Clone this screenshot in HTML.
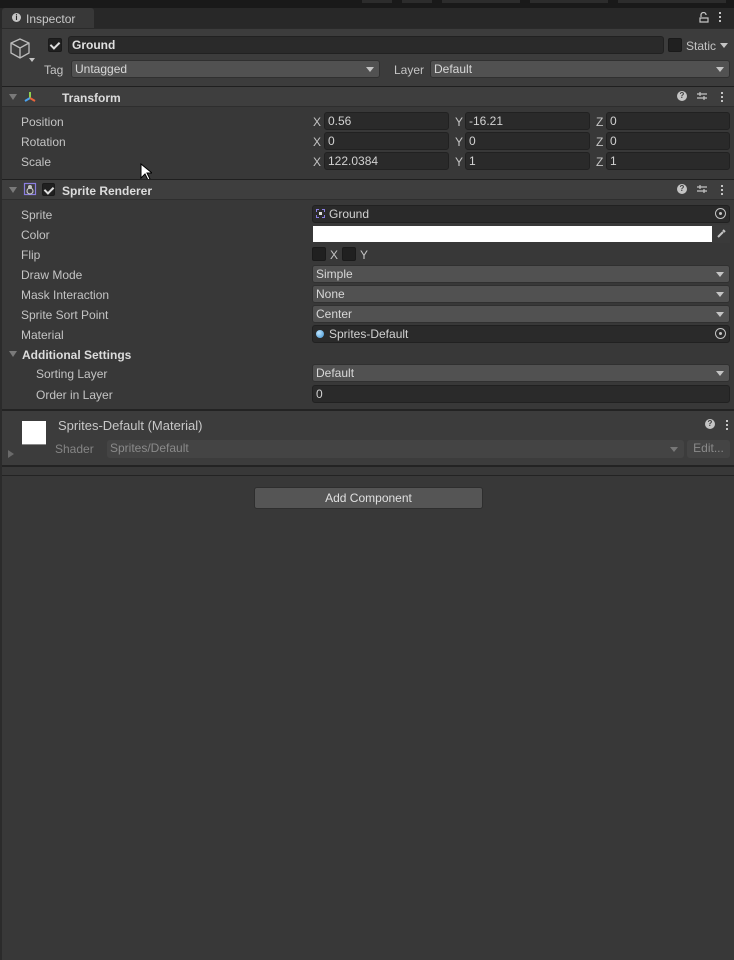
<!DOCTYPE html>
<html><head><style>
*{margin:0;padding:0;box-sizing:border-box}
body{width:734px;height:960px;background:#383838;font-family:"Liberation Sans",sans-serif;font-size:12px;color:#c4c4c4;position:relative;overflow:hidden}
.a{position:absolute}
.lbl{position:absolute;left:21px;line-height:14px;padding-top:1px}
.fld{position:absolute;height:18px;background:#2a2a2a;border:1px solid #212121;border-radius:3px;padding-left:3px;line-height:17px;color:#d2d2d2}
.dd{position:absolute;height:18px;background:#515151;border:1px solid #303030;border-radius:3px;padding-left:3px;line-height:17px;color:#d8d8d8}
.dd:after{content:"";position:absolute;right:5px;top:6px;border-left:4px solid transparent;border-right:4px solid transparent;border-top:5px solid #c4c4c4}
.ax{position:absolute;line-height:14px;padding-top:1px;color:#c4c4c4}
.hdr{position:absolute;left:0;width:734px;height:21px;background:#3e3e3e;border-top:1px solid #1f1f1f;border-bottom:1px solid #2e2e2e}
.tri{position:absolute;border-left:4px solid transparent;border-right:4px solid transparent;border-top:6px solid #7a7a7a}
.cb{position:absolute;width:14px;height:14px;background:#202020;border:1px solid #1a1a1a;border-radius:2px}
.ck:after{content:"";position:absolute;left:3px;top:1px;width:4px;height:7px;border-right:2px solid #ddd;border-bottom:2px solid #ddd;transform:rotate(45deg)}
.sep{position:absolute;left:0;width:734px;height:2px;background:#232323}
.bold{font-weight:bold;color:#dcdcdc}
</style></head><body>
<div class="a" style="left:0;top:0;width:734px;height:8px;background:#191919"></div>
<div class="a" style="left:362px;top:0;width:30px;height:3px;background:#2c2c2c"></div>
<div class="a" style="left:402px;top:0;width:30px;height:3px;background:#2c2c2c"></div>
<div class="a" style="left:442px;top:0;width:78px;height:3px;background:#2c2c2c"></div>
<div class="a" style="left:530px;top:0;width:78px;height:3px;background:#2c2c2c"></div>
<div class="a" style="left:618px;top:0;width:108px;height:3px;background:#2c2c2c"></div>
<div class="a" style="left:0;top:8px;width:734px;height:20px;background:#282828"></div>
<div class="a" style="left:2px;top:8px;width:92px;height:20px;background:#383838;border-radius:3px 3px 0 0"></div>
<div class="a" style="left:12px;top:13px;width:9px;height:9px;border-radius:50%;background:#c4c4c4;color:#282828;font-size:8px;font-weight:bold;text-align:center;line-height:9px">i</div>
<div class="a" style="left:26px;top:12px;font-size:12px;line-height:14px;color:#c8c8c8">Inspector</div>
<svg class="a" style="left:698px;top:12px" width="12" height="12"><path d="M3 5V3a2.5 2.5 0 0 1 5 0M2 6h8v4H2z" fill="none" stroke="#c4c4c4" stroke-width="1.2"/></svg>
<div class="a" style="left:719px;top:12px;width:2px;height:2px;background:#c4c4c4;box-shadow:0 4px #c4c4c4,0 8px #c4c4c4"></div>
<div class="a" style="left:0;top:28px;width:734px;height:1px;background:#2a2a2a"></div>
<div class="a" style="left:0;top:29px;width:734px;height:57px;background:#3c3c3c"></div>
<svg class="a" style="left:9px;top:37px" width="24" height="24"><path d="M11 2l9 4v10l-9 5-9-5V6z M2 6l9 5 9-5 M11 11v10" fill="none" stroke="#bdbdbd" stroke-width="1.3"/></svg>
<div class="a" style="left:29px;top:58px;border-left:3px solid transparent;border-right:3px solid transparent;border-top:4px solid #c4c4c4"></div>
<div class="cb ck" style="left:48px;top:38px"></div>
<div class="fld" style="left:68px;top:36px;width:596px;height:18px;font-weight:bold;color:#e0e0e0">Ground</div>
<div class="cb" style="left:668px;top:38px"></div>
<div class="a" style="left:686px;top:39px;line-height:14px">Static</div>
<div class="a" style="left:720px;top:43px;border-left:4px solid transparent;border-right:4px solid transparent;border-top:5px solid #c4c4c4"></div>
<div class="a" style="left:44px;top:63px;line-height:14px">Tag</div>
<div class="dd" style="left:71px;top:60px;width:309px">Untagged</div>
<div class="a" style="left:394px;top:63px;line-height:14px">Layer</div>
<div class="dd" style="left:430px;top:60px;width:300px">Default</div>
<div class="hdr" style="top:86px"></div>
<div class="tri" style="left:9px;top:94px"></div>
<svg class="a" style="left:23px;top:90px" width="14" height="14"><path d="M7 2v6" stroke="#8fd14f" stroke-width="2"/><path d="M7 8l-5 3" stroke="#4aa3f0" stroke-width="2"/><path d="M7 8l5 3" stroke="#e8643c" stroke-width="2"/></svg>
<div class="a bold" style="left:62px;top:91px;line-height:14px">Transform</div>
<div class="a" style="left:677px;top:91px;width:10px;height:10px;border-radius:50%;background:#c4c4c4;color:#3e3e3e;font-size:8px;font-weight:bold;text-align:center;line-height:10px">?</div>
<svg class="a" style="left:696px;top:90px" width="12" height="12"><path d="M1 4h10M1 8h10M4 2v4M8 6v4" stroke="#c4c4c4" stroke-width="1.2"/></svg>
<div class="a" style="left:721px;top:92px;width:2px;height:2px;background:#c4c4c4;box-shadow:0 4px #c4c4c4,0 8px #c4c4c4"></div>
<div class="lbl" style="top:114px">Position</div>
<div class="lbl" style="top:134px">Rotation</div>
<div class="lbl" style="top:154px">Scale</div>
<div class="ax" style="left:313px;top:114px">X</div><div class="fld" style="left:324px;top:112px;width:125px">0.56</div>
<div class="ax" style="left:455px;top:114px">Y</div><div class="fld" style="left:465px;top:112px;width:125px">-16.21</div>
<div class="ax" style="left:596px;top:114px">Z</div><div class="fld" style="left:606px;top:112px;width:124px">0</div>
<div class="ax" style="left:313px;top:134px">X</div><div class="fld" style="left:324px;top:132px;width:125px">0</div>
<div class="ax" style="left:455px;top:134px">Y</div><div class="fld" style="left:465px;top:132px;width:125px">0</div>
<div class="ax" style="left:596px;top:134px">Z</div><div class="fld" style="left:606px;top:132px;width:124px">0</div>
<div class="ax" style="left:313px;top:154px">X</div><div class="fld" style="left:324px;top:152px;width:125px">122.0384</div>
<div class="ax" style="left:455px;top:154px">Y</div><div class="fld" style="left:465px;top:152px;width:125px">1</div>
<div class="ax" style="left:596px;top:154px">Z</div><div class="fld" style="left:606px;top:152px;width:124px">1</div>
<svg class="a" style="left:140px;top:163px" width="12" height="18"><path d="M1 1v14l4-4 3 6 2-1-3-6h5z" fill="#fff" stroke="#000" stroke-width="1"/></svg>
<div class="hdr" style="top:179px"></div>
<div class="tri" style="left:9px;top:187px"></div>
<svg class="a" style="left:23px;top:182px" width="14" height="14"><rect x="1.5" y="1.5" width="11" height="11" fill="none" stroke="#8a7ee0" stroke-width="1.2"/><circle cx="7" cy="9" r="3" fill="none" stroke="#c4c4c4" stroke-width="1.2"/><circle cx="7" cy="5" r="2" fill="#c4c4c4"/></svg>
<div class="cb ck" style="left:42px;top:183px;width:13px;height:13px"></div>
<div class="a bold" style="left:62px;top:184px;line-height:14px">Sprite Renderer</div>
<div class="a" style="left:677px;top:184px;width:10px;height:10px;border-radius:50%;background:#c4c4c4;color:#3e3e3e;font-size:8px;font-weight:bold;text-align:center;line-height:10px">?</div>
<svg class="a" style="left:696px;top:183px" width="12" height="12"><path d="M1 4h10M1 8h10M4 2v4M8 6v4" stroke="#c4c4c4" stroke-width="1.2"/></svg>
<div class="a" style="left:721px;top:185px;width:2px;height:2px;background:#c4c4c4;box-shadow:0 4px #c4c4c4,0 8px #c4c4c4"></div>
<div class="lbl" style="top:207px">Sprite</div>
<div class="lbl" style="top:227px">Color</div>
<div class="lbl" style="top:247px">Flip</div>
<div class="lbl" style="top:267px">Draw Mode</div>
<div class="lbl" style="top:287px">Mask Interaction</div>
<div class="lbl" style="top:307px">Sprite Sort Point</div>
<div class="lbl" style="top:327px">Material</div>
<div class="tri" style="left:9px;top:351px"></div>
<div class="lbl bold" style="left:22px;top:347px">Additional Settings</div>
<div class="lbl" style="left:36px;top:366px">Sorting Layer</div>
<div class="lbl" style="left:36px;top:387px">Order in Layer</div>
<div class="fld" style="left:312px;top:205px;width:418px;padding-left:16px">Ground</div>
<div class="a" style="left:316px;top:209px;width:9px;height:9px;border:1px dashed #8a7ee0"></div>
<div class="a" style="left:319px;top:212px;width:3px;height:3px;background:#ddd"></div>
<div class="a" style="left:715px;top:208px;width:11px;height:11px;border:1px solid #c4c4c4;border-radius:50%"></div>
<div class="a" style="left:719px;top:212px;width:3px;height:3px;background:#c4c4c4;border-radius:50%"></div>
<div class="a" style="left:313px;top:226px;width:399px;height:16px;background:#fff"></div>
<div class="a" style="left:712px;top:225px;width:18px;height:18px;background:#3a3a3a"></div>
<svg class="a" style="left:716px;top:228px" width="11" height="11"><path d="M2 9l5-5M7 2l2 2" stroke="#c4c4c4" stroke-width="2"/></svg>
<div class="cb" style="left:312px;top:247px"></div>
<div class="ax" style="left:330px;top:247px">X</div>
<div class="cb" style="left:342px;top:247px"></div>
<div class="ax" style="left:360px;top:247px">Y</div>
<div class="dd" style="left:312px;top:265px;width:418px">Simple</div>
<div class="dd" style="left:312px;top:285px;width:418px">None</div>
<div class="dd" style="left:312px;top:305px;width:418px">Center</div>
<div class="fld" style="left:312px;top:325px;width:418px;padding-left:16px">Sprites-Default</div>
<div class="a" style="left:316px;top:330px;width:8px;height:8px;border-radius:50%;background:radial-gradient(circle at 35% 35%,#bfe6ff,#3a8fd0)"></div>
<div class="a" style="left:715px;top:328px;width:11px;height:11px;border:1px solid #c4c4c4;border-radius:50%"></div>
<div class="a" style="left:719px;top:332px;width:3px;height:3px;background:#c4c4c4;border-radius:50%"></div>
<div class="dd" style="left:312px;top:364px;width:418px">Default</div>
<div class="fld" style="left:312px;top:385px;width:418px">0</div>
<div class="sep" style="top:409px"></div>
<div class="a" style="left:0;top:411px;width:734px;height:55px;background:#3c3c3c"></div>
<div class="a" style="left:22px;top:421px;width:24px;height:24px;background:#fff;border-bottom:1px solid #888"></div>
<div class="a" style="left:58px;top:418px;font-size:13px;line-height:15px;color:#c8c8c8">Sprites-Default (Material)</div>
<div class="a" style="left:705px;top:419px;width:10px;height:10px;border-radius:50%;background:#c4c4c4;color:#3c3c3c;font-size:8px;font-weight:bold;text-align:center;line-height:10px">?</div>
<div class="a" style="left:726px;top:420px;width:2px;height:2px;background:#c4c4c4;box-shadow:0 4px #c4c4c4,0 8px #c4c4c4"></div>
<div class="a" style="left:8px;top:450px;border-top:4px solid transparent;border-bottom:4px solid transparent;border-left:6px solid #6a6a6a"></div>
<div class="a" style="left:55px;top:442px;line-height:14px;color:#858585">Shader</div>
<div class="a" style="left:107px;top:440px;width:577px;height:18px;background:#444;border-radius:3px;padding-left:3px;line-height:17px;color:#8a8a8a">Sprites/Default</div>
<div class="a" style="left:670px;top:447px;border-left:4px solid transparent;border-right:4px solid transparent;border-top:5px solid #777"></div>
<div class="a" style="left:687px;top:440px;width:43px;height:18px;background:#444;border-radius:3px;text-align:center;line-height:17px;color:#8a8a8a">Edit...</div>
<div class="sep" style="top:465px"></div>
<div class="sep" style="top:475px;height:1px"></div>
<div class="a" style="left:254px;top:487px;width:229px;height:22px;background:#555;border:1px solid #2e2e2e;border-radius:3px;text-align:center;line-height:20px;color:#e0e0e0">Add Component</div>
<div class="a" style="left:0;top:29px;width:2px;height:931px;background:#2b2b2b"></div>
</body></html>
